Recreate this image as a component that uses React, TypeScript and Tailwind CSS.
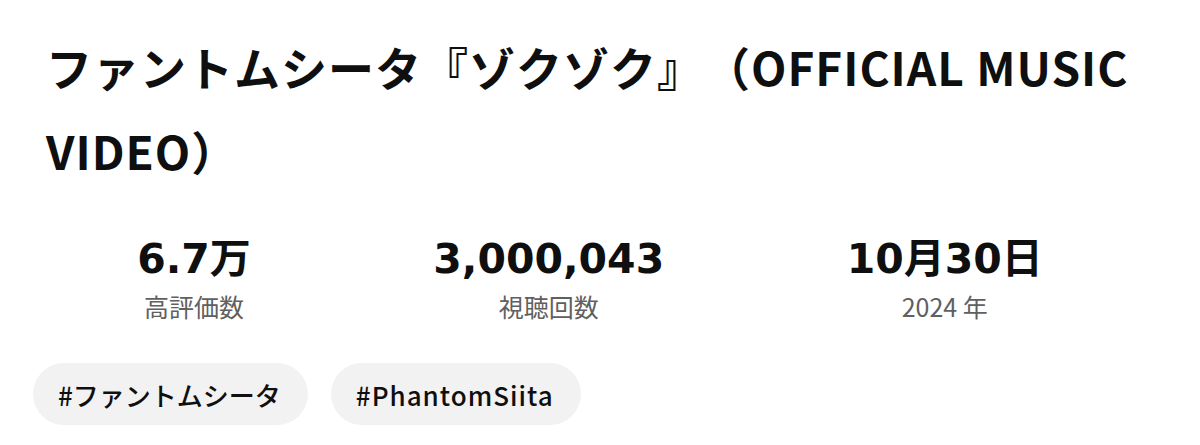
const jp = "font-['Noto_Sans_CJK_JP','Noto_Sans',sans-serif]";

const stats = [
  { value: '6.7万', label: '高評価数' },
  { value: '3,000,043', label: '視聴回数' },
  { value: '10月30日', label: '2024 年' },
];

const tags = [
  { text: '#ファントムシータ', extra: '' },
  { text: '#PhantomSiita', extra: 'tracking-[1px]' },
];

export default function App() {
  return (
    <div className={`min-h-[445px] bg-white px-[46px] pt-[24px] text-[#0f0f0f] ${jp}`}>
      <h1 className="text-[46px] font-bold leading-[84px] tracking-[1px] [text-spacing-trim:space-all]">
        ファントムシータ『ゾクゾク』（OFFICIAL MUSIC VIDEO）
      </h1>

      <div className="mt-[45px] flex justify-around pr-[20px]">
        {stats.map((s) => (
          <div key={s.label} className="flex flex-col items-center">
            <div className="font-['DejaVu_Sans','Noto_Sans_CJK_JP',sans-serif] text-[41px] font-bold leading-[44px]">
              {s.value}
            </div>
            <div className="mt-[10px] text-[25px] leading-[30px] text-[#606060]">{s.label}</div>
          </div>
        ))}
      </div>

      <div className="mt-[42px] -ml-[13px] flex gap-[23px]">
        {tags.map((t) => (
          <span
            key={t.text}
            className={`flex h-[62px] items-center rounded-full bg-[#f2f2f2] pl-[25px] pr-[27px] text-[26px] font-medium ${t.extra}`}
          >
            {t.text}
          </span>
        ))}
      </div>
    </div>
  );
}
